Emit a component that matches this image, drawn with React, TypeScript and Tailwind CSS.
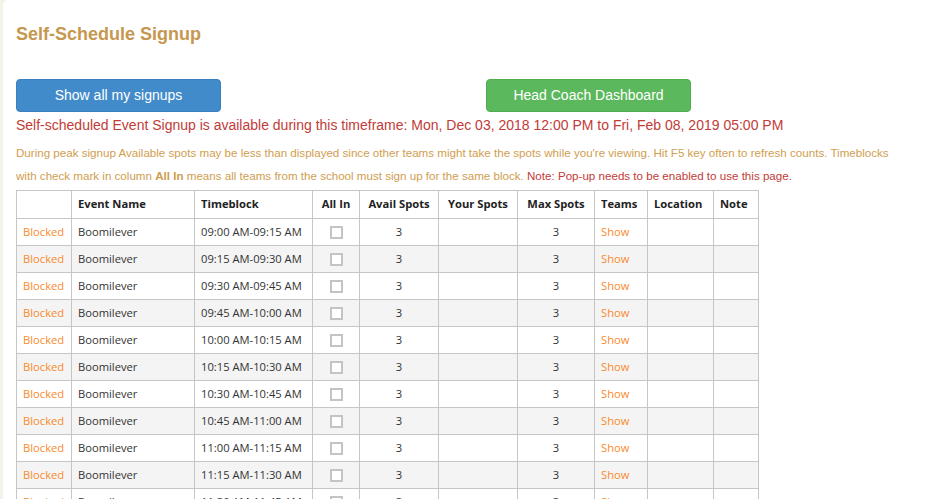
import React from "react";

const TIMES = [
  "09:00 AM-09:15 AM",
  "09:15 AM-09:30 AM",
  "09:30 AM-09:45 AM",
  "09:45 AM-10:00 AM",
  "10:00 AM-10:15 AM",
  "10:15 AM-10:30 AM",
  "10:30 AM-10:45 AM",
  "10:45 AM-11:00 AM",
  "11:00 AM-11:15 AM",
  "11:15 AM-11:30 AM",
  "11:30 AM-11:45 AM",
];

const HEADERS = [
  { label: "", w: "w-[55px]", align: "text-left" },
  { label: "Event Name", w: "w-[123px]", align: "text-left" },
  { label: "Timeblock", w: "w-[118px]", align: "text-left" },
  { label: "All In", w: "w-[47px]", align: "text-center" },
  { label: "Avail Spots", w: "w-[79px]", align: "text-center" },
  { label: "Your Spots", w: "w-[79px]", align: "text-center" },
  { label: "Max Spots", w: "w-[77px]", align: "text-center" },
  { label: "Teams", w: "w-[53px]", align: "text-left" },
  { label: "Location", w: "w-[66px]", align: "text-left" },
  { label: "Note", w: "w-[45px]", align: "text-left" },
];

const cell = "border border-[#c6c6c6] px-[6px] py-0 h-[27px] align-middle whitespace-nowrap overflow-hidden";

export default function App() {
  return (
    <div className="min-h-[499px] bg-[#f4f3e8] pl-[3px] font-['Liberation_Sans',Arial,sans-serif]">
      <div className="min-h-[499px] rounded-tl-[5px] bg-white pl-[13px] pt-[24px]">
        <h1 className="text-[18px] font-bold leading-[20px] text-[#c6974f]">Self-Schedule Signup</h1>

        {/* action buttons */}
        <div className="mt-[35px] grid grid-cols-[470px_205px]">
          <button className="h-[33px] w-[205px] rounded-[4px] border border-[#3a7fc0] bg-[#428bca] text-[14px] text-white">
            Show all my signups
          </button>
          <button className="h-[33px] w-[205px] rounded-[4px] border border-[#4cae4c] bg-[#5cb85c] text-[14px] text-white">
            Head Coach Dashboard
          </button>
        </div>

        <p className="mt-[3px] text-[14px] leading-[20px] text-[#c23b37]">
          Self-scheduled Event Signup is available during this timeframe: Mon, Dec 03, 2018 12:00 PM to Fri, Feb 08, 2019 05:00 PM
        </p>

        <p className="mt-[6px] w-[875px] text-[11.6px] leading-[23px] text-[#cf9e4f]">
          During peak signup Available spots may be less than displayed since other teams might take the spots while you're viewing. Hit F5 key often to refresh counts. Timeblocks with check mark in column{" "}
          <b className="font-bold">All In</b> means all teams from the school must sign up for the same block.{" "}
          <span className="text-[#c23b37]">Note: Pop-up needs to be enabled to use this page.</span>
        </p>

        {/* timeblock table */}
        <table className="mt-[3px] w-[742px] table-fixed border-collapse font-['Open_Sans','Noto_Sans',sans-serif] text-[11.2px] text-[#333]">
          <thead>
            <tr>
              {HEADERS.map((h) => (
                <th key={h.label} className={`${cell} h-[28px] ${h.w} ${h.align} font-bold text-[#222]`}>
                  {h.label}
                </th>
              ))}
            </tr>
          </thead>
          <tbody>
            {TIMES.map((t, i) => (
              <tr key={t} className={i % 2 === 1 ? "bg-[#f4f4f4]" : "bg-white"}>
                <td className={`${cell} text-[#fa8a2c]`}>Blocked</td>
                <td className={cell}>Boomilever</td>
                <td className={cell}>{t}</td>
                <td className={`${cell} text-center`}>
                  <span className="inline-block h-[13px] w-[13px] border-2 border-[#c4c4c4] bg-white align-middle" />
                </td>
                <td className={`${cell} text-center`}>3</td>
                <td className={cell}></td>
                <td className={`${cell} text-center`}>3</td>
                <td className={`${cell} text-[#fa8a2c]`}>Show</td>
                <td className={cell}></td>
                <td className={cell}></td>
              </tr>
            ))}
          </tbody>
        </table>
      </div>
    </div>
  );
}
